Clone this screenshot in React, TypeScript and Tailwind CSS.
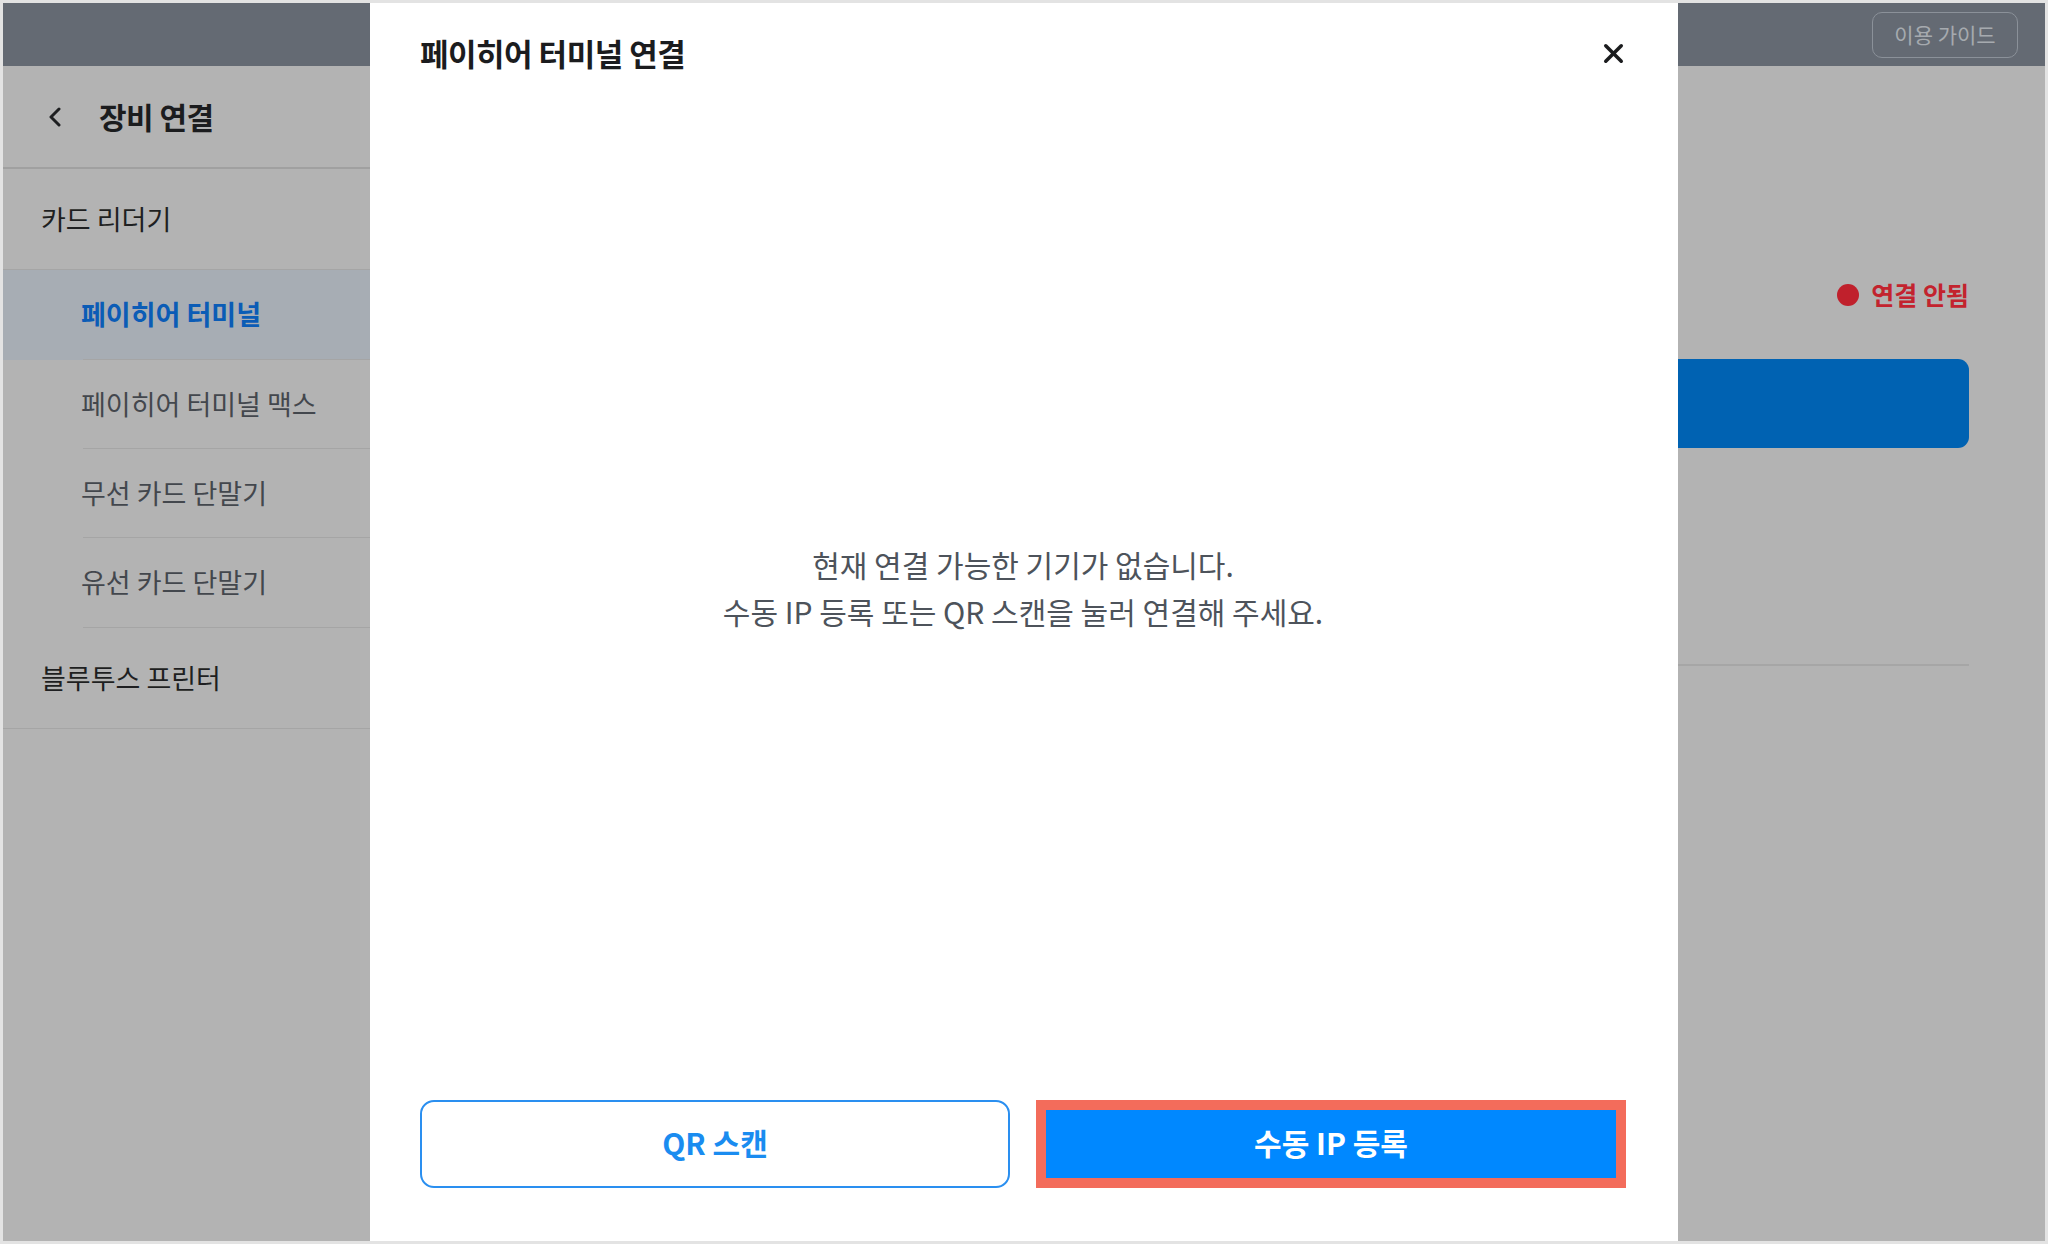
import { X } from 'lucide-react'

const font = { fontFamily: '"Noto Sans CJK KR", "Noto Sans", sans-serif' }

const subItems = [
  { label: '페이히어 터미널', h: 'h-[90px]' },
  { label: '페이히어 터미널 맥스', h: 'h-[89px]' },
  { label: '무선 카드 단말기', h: 'h-[89px]' },
  { label: '유선 카드 단말기', h: 'h-[90px]' },
]

function Sidebar() {
  return (
    <aside className="w-[420px] shrink-0 flex flex-col">
      <div className="h-[103px] flex items-center border-b-2 border-[#a0a0a0]">
        <svg width="16" height="20" viewBox="0 0 16 20" className="ml-[44px]" fill="none">
          <path d="M12 2 L4 10 L12 18" stroke="#1e1f21" strokeWidth="3" strokeLinecap="round" strokeLinejoin="round" />
        </svg>
        <span className="ml-[36px] text-[30px] font-bold text-[#1b1c1e] tracking-[-0.5px]">장비 연결</span>
      </div>
      <div className="h-[101px] flex items-center pl-[38px] border-b border-[#a5a5a5]">
        <span className="text-[27px] text-[#1e1f21]">카드 리더기</span>
      </div>
      {subItems.map((item, i) => (
        <div key={item.label} className={i === 0 ? 'bg-[#a7adb4]' : ''}>
          <div className={`${item.h} ml-[80px] flex items-center border-b border-[#a5a5a5]`}>
            <span
              className={
                i === 0
                  ? '-ml-[2px] text-[27px] font-semibold text-[#0b5cb6]'
                  : '-ml-[2px] text-[27px] text-[#43474d]'
              }
            >
              {item.label}
            </span>
          </div>
        </div>
      ))}
      <div className="h-[101px] flex items-center pl-[38px] border-b border-[#a5a5a5]">
        <span className="text-[27px] text-[#1e1f21]">블루투스 프린터</span>
      </div>
    </aside>
  )
}

function Background() {
  return (
    <div className="flex flex-col h-full">
      <header className="h-[63px] bg-[#646a73] flex items-center justify-end pr-[27px]">
        <div className="h-[46px] w-[146px] rounded-[10px] border border-[#8b9199] flex items-center justify-center text-[21px] text-[#a6aaaf]">
          이용 가이드
        </div>
      </header>
      <div className="flex flex-1">
        <Sidebar />
        <main className="flex-1 flex flex-col items-end pr-[76px] pl-[60px] pt-[212px]">
          <div className="flex items-center gap-[12px] h-[34px]">
            <span className="w-[22px] h-[22px] rounded-full bg-[#c0202c]" />
            <span className="text-[25px] font-bold text-[#c3232e]">연결 안됨</span>
          </div>
          <div className="mt-[47px] h-[89px] w-full rounded-[11px] bg-[#0062b2]" />
          <div className="mt-[216px] w-full border-b-2 border-[#a6a6a6]" />
        </main>
      </div>
    </div>
  )
}

function Modal() {
  return (
    <div className="absolute left-[367px] top-0 bottom-0 w-[1308px] bg-white flex flex-col pl-[50px] pr-[52px] pb-[53px]">
      <div className="h-[102px] flex items-center justify-between">
        <h2 className="text-[31px] font-bold text-[#1b1c1e] tracking-[-0.5px] -mt-[2px]">페이히어 터미널 연결</h2>
        <X size={31} strokeWidth={2.7} color="#1b1c1e" className="mr-[-3px] -mt-[2px]" />
      </div>
      <div className="flex-1 flex flex-col items-center justify-center pb-[30px] text-[30px] leading-[47px] text-[#4d535b]">
        <p>현재 연결 가능한 기기가 없습니다.</p>
        <p>수동 IP 등록 또는 QR 스캔을 눌러 연결해 주세요.</p>
      </div>
      <div className="grid grid-cols-2 gap-[26px]">
        <button className="h-[88px] pb-[4px] rounded-[14px] border-2 border-[#2a8ff0] bg-white text-[30px] font-bold text-[#1a8cf0]">
          QR 스캔
        </button>
        <button className="h-[88px] pb-[4px] border-[10px] border-[#f36c5b] bg-[#0088ff] text-[30px] font-semibold text-white">
          수동 IP 등록
        </button>
      </div>
    </div>
  )
}

export default function App() {
  return (
    <div style={font} className="w-[2048px] h-[1244px] border-[3px] border-[#e3e3e3] bg-[#b3b3b3]">
      <div className="relative w-full h-full overflow-hidden">
        <Background />
        <Modal />
      </div>
    </div>
  )
}
